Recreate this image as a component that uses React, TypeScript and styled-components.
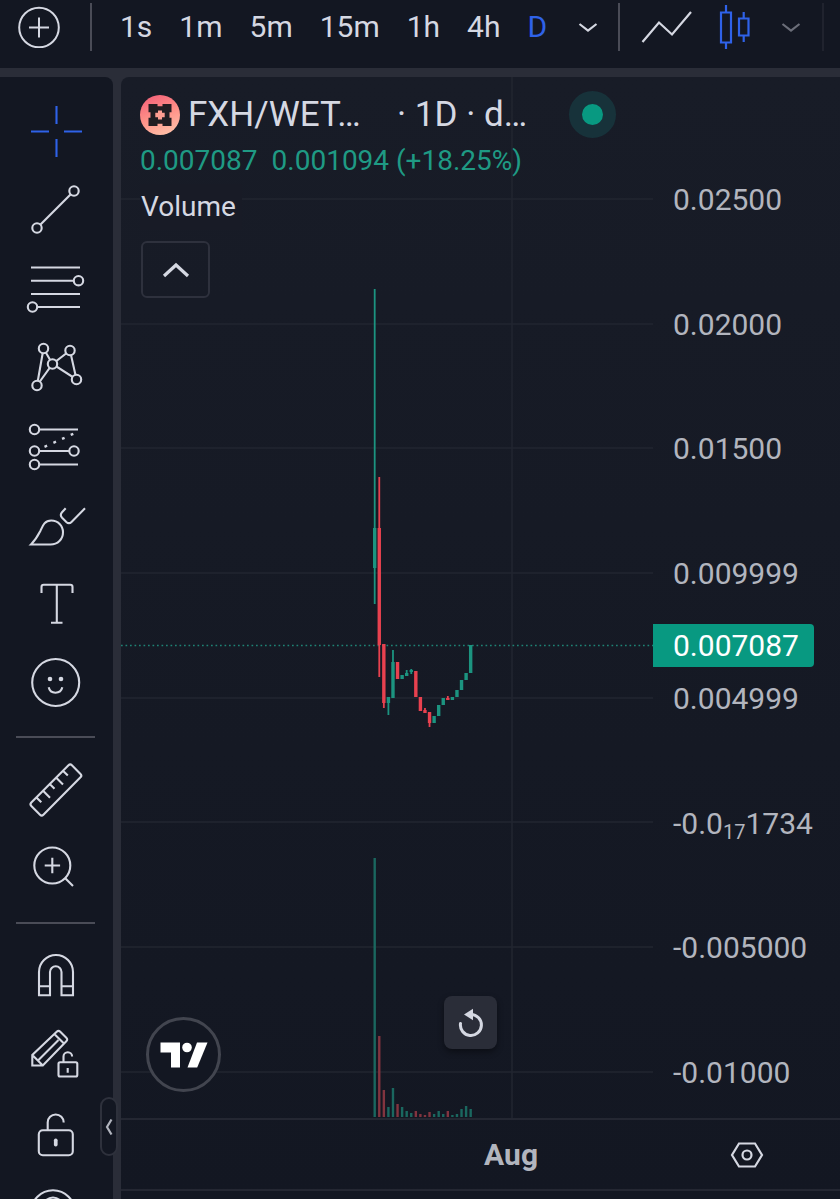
import React from "react";
import styled, { createGlobalStyle } from "styled-components";

const color = {
  frame: "#2a2d38",
  panel: "#131722",
  text: "#d5d8e2",
  axis: "#b2b5be",
  divider: "#4a4c57",
  accent: "#2f62e8",
  up: "#089981",
  down: "#e8414f",
};

const GlobalStyle = createGlobalStyle`
  * { box-sizing: border-box; }
  body {
    margin: 0;
    background: ${color.frame};
    color: ${color.text};
    font-family: Roboto, "Liberation Sans", sans-serif;
  }
`;

const Page = styled.div`
  display: flex;
  flex-direction: column;
  gap: 9px;
  height: 100vh;
  overflow: hidden;
`;

const PlainButton = styled.button`
  display: flex;
  flex: none;
  align-items: center;
  justify-content: center;
  margin: 0;
  padding: 0;
  border: 0;
  background: none;
  color: inherit;
  font: inherit;
`;

const Toolbar = styled.header`
  display: flex;
  flex: none;
  align-items: center;
  height: 68px;
  padding: 0 0 14px 18px;
  overflow: hidden;
  background: ${color.panel};
`;

const ToolbarDivider = styled.span<{ $faint?: boolean }>`
  flex: none;
  width: 2px;
  height: 48px;
  background: ${(p) => (p.$faint ? "#20232e" : color.divider)};
`;

const Intervals = styled.nav`
  display: flex;
  align-items: center;
  gap: 27px;
  margin: 0 16px 0 28px;
`;

const AddButton = styled(PlainButton)`
  margin-right: 30px;
`;

const IntervalButton = styled(PlainButton)<{ $active?: boolean }>`
  font-size: 30px;
  line-height: 36px;
  color: ${(p) => (p.$active ? color.accent : color.text)};
`;

const ChartTypes = styled.div`
  display: flex;
  align-items: center;
  gap: 26px;
  margin: 0 17px 0 21px;
`;

const Workspace = styled.div`
  display: flex;
  flex: 1;
  gap: 8px;
  min-height: 0;
`;

const Sidebar = styled.aside`
  position: relative;
  flex: none;
  width: 113px;
  padding-top: 14px;
  border-top-right-radius: 8px;
  background: ${color.panel};
`;

const ToolButton = styled(PlainButton)<{ $active?: boolean }>`
  width: 112px;
  height: 79px;
  color: ${(p) => (p.$active ? color.accent : color.text)};
`;

const ToolList = styled.div`
  display: flex;
  flex-direction: column;
  height: 100%;
  overflow: hidden;
`;

const ToolDivider = styled.hr`
  flex: none;
  width: 79px;
  height: 2px;
  margin: 13px 0 13px 16px;
  border: 0;
  background: ${color.divider};
`;

const CollapseTab = styled(PlainButton)`
  position: absolute;
  right: -5px;
  bottom: 43px;
  width: 18px;
  height: 59px;
  border: 2px solid #2e313c;
  border-radius: 9px;
  background: ${color.panel};
`;

const ChartPanel = styled.main`
  display: flex;
  flex: 1;
  flex-direction: column;
  min-width: 0;
  border-top-left-radius: 8px;
  background: linear-gradient(#181c27, #131722);
  overflow: hidden;
`;

const ChartRow = styled.div`
  position: relative;
  display: flex;
  flex: 1;
  min-height: 0;
`;

const Plot = styled.div`
  position: relative;
  flex: 1;
  min-width: 0;
`;

const PlotDrawing = styled.svg`
  display: block;
  width: 100%;
  height: 100%;
`;

const PriceAxis = styled.div`
  position: relative;
  display: flex;
  flex: none;
  flex-direction: column;
  justify-content: space-between;
  width: 187px;
  padding: 105px 0 27px 20px;
  color: ${color.axis};
  font-size: 30px;
  line-height: 36px;
  white-space: nowrap;
`;

const Subscript = styled.sub`
  font-size: 20px;
  line-height: 0;
  vertical-align: -5px;
`;

const LastPrice = styled.div`
  position: absolute;
  top: 52.5%;
  left: 0;
  width: 161px;
  padding: 4px 0 3px 20px;
  border-radius: 0 4px 4px 0;
  background: ${color.up};
  color: #fff;
`;

const Legend = styled.section`
  position: absolute;
  top: 14px;
  left: 19px;
`;

const SymbolRow = styled.div`
  display: grid;
  grid-template-columns: 40px 201px 164px 48px;
  gap: 8px;
  align-items: center;
  height: 47px;
  font-size: 35px;
  white-space: nowrap;
`;

const SymbolName = styled.h1`
  margin: 0;
  font-size: 35px;
  font-weight: 400;
  line-height: 40px;
`;

const StatusDot = styled.span`
  width: 47px;
  height: 47px;
  border: 13px solid #17323a;
  border-radius: 50%;
  background: ${color.up};
`;

const Values = styled.div`
  display: flex;
  gap: 14px;
  color: #1f9a84;
  font-size: 28px;
  line-height: 46px;
  white-space: nowrap;
`;

const StudyName = styled.div`
  width: fit-content;
  padding: 0 6px 0 1px;
  background: #181b26;
  font-size: 28px;
  line-height: 46px;
`;

const LegendToggle = styled(PlainButton)`
  width: 69px;
  height: 57px;
  margin: 11px 0 0 1px;
  border: 2px solid #2e313d;
  border-radius: 6px;
`;

const Watermark = styled.a`
  position: absolute;
  bottom: 26px;
  left: 25px;
  display: flex;
  align-items: center;
  justify-content: center;
  width: 75px;
  height: 75px;
  border: 3px solid #42454f;
  border-radius: 50%;
  background: ${color.panel};
`;

const ResetButton = styled(PlainButton)`
  position: absolute;
  right: 156px;
  bottom: 69px;
  width: 53px;
  height: 53px;
  border-radius: 8px;
  background: #2a2d38;
  box-shadow: 0 3px 6px rgba(0, 0, 0, 0.4);
`;

const TimeRow = styled.div`
  display: flex;
  flex: none;
  align-items: center;
  height: 71px;
  border-top: 2px solid #242732;
`;

const TimeAxis = styled.div`
  flex: 1;
  padding-left: 50.5%;
  color: ${color.axis};
  font-size: 30px;
  font-weight: 700;
  line-height: 36px;
`;

const AxisSettings = styled(PlainButton)`
  width: 187px;
`;

const Footer = styled.footer`
  flex: none;
  height: 10px;
  border-top: 2px solid #242732;
`;

const Chevron = ({ stroke = "currentColor" }: { stroke?: string }) => (
  <svg width="28" height="28" viewBox="0 0 28 28" fill="none" stroke={stroke} strokeWidth="2.2">
    <path d="M5.5 11 14 17.5 22.5 11" />
  </svg>
);

const ToolIcon = ({ children }: { children: React.ReactNode }) => (
  <svg width="112" height="79" viewBox="0 0 112 79" fill="none" stroke="currentColor" strokeWidth="2.1">
    {children}
  </svg>
);

const Nodes = ({ points }: { points: number[][] }) => (
  <>
    {points.map(([x, y]) => (
      <circle key={`${x}-${y}`} cx={x} cy={y} r="4.7" fill={color.panel} />
    ))}
  </>
);

const drawingTools = [
  {
    name: "Cross",
    icon: <path d="M56.5 15v18M56.5 48v18M31 40.5h18M64 40.5h18" />,
  },
  {
    name: "Trend line",
    icon: (
      <>
        <path d="M37 58 74 21" />
        <Nodes points={[[37, 58], [74, 21]]} />
      </>
    ),
  },
  {
    name: "Fib retracement",
    icon: (
      <>
        <path d="M31 18.5h49M31 31.7h47M31 45h49M32 58h48" />
        <Nodes points={[[78.5, 31.7], [32.5, 58]]} />
      </>
    ),
  },
  {
    name: "Pattern",
    icon: (
      <>
        <path d="M52.5 36 43.5 20.5 37 57.5 52.5 36 70 22.5 76.5 51.5Z" />
        <Nodes points={[[43.5, 20.5], [70, 22.5], [52.5, 36], [37, 57.5], [76.5, 51.5]]} />
      </>
    ),
  },
  {
    name: "Forecast",
    icon: (
      <>
        <path d="M35 22.5h43M35 44h39M35 57.5h43" />
        <path d="m44.5 39.8 2.6-1.1M53.4 35.8l2.6-1.1M62 31.9l2.6-1.1M70.7 27.9l2.6-1.1" strokeWidth="2.4" />
        <Nodes points={[[34.5, 22.5], [34.5, 44], [74, 44], [34.5, 57.5]]} />
      </>
    ),
  },
  {
    name: "Brush",
    icon: (
      <path d="M31 58.5c3-3 6.5-8 9.2-13.2 2.5-5.6 4.3-10.8 11-10.8 6.8 0 11.8 5.2 11.8 11.7 0 7-5.3 12.3-12.5 12.3ZM65.7 22.3l-3.7 4c-1.6 1.8-1.5 3.7.1 5.4l4.2 4.2c1.7 1.6 3.7 1.5 5.2 0L85 22.3" />
    ),
  },
  {
    name: "Text",
    icon: <path d="M41.5 28v-6q0-2.2 2.2-2.2h26.6q2.2 0 2.2 2.2v6M56.8 20v37.5M51 57.7h11.5" />,
  },
  {
    name: "Emoji",
    icon: (
      <>
        <circle cx="55.7" cy="38.5" r="23.5" />
        <circle cx="50" cy="35" r="2.3" fill="currentColor" stroke="none" />
        <circle cx="61" cy="35" r="2.3" fill="currentColor" stroke="none" />
        <path d="M48.7 43.3c1.5 7.2 12 7.2 13.6 0" />
      </>
    ),
  },
];

const measureTools = [
  {
    name: "Measure",
    icon: (
      <path d="M68.5 14.3q1.7-1.7 3.4 0l8.6 8.6q1.7 1.7 0 3.4L43.4 63.7q-1.7 1.7-3.4 0l-8.7-8.7q-1.7-1.7 0-3.4ZM36.7 46.7l4.6 4.6M43.3 40l6.7 6.7M50 33.3l4.5 4.5M56.5 27l6.5 6.5M63.2 20l4.6 4.6" />
    ),
  },
  {
    name: "Zoom in",
    icon: (
      <>
        <circle cx="52.3" cy="35.5" r="18" />
        <path d="M44.7 35.5h15.4M52.3 27.8v15.4M65 48l8 8" />
      </>
    ),
  },
];

const stateTools = [
  {
    name: "Magnet",
    icon: <path d="M39 58.2V35a17 17 0 0 1 34 0v23.2H61.5V35a5.7 5.7 0 0 0-11.5 0v23.2ZM39 49.2h11M61.5 49.2H73" />,
  },
  {
    name: "Stay in drawing mode",
    icon: (
      <>
        <path d="M32.3 49.5V39l24.4-23.3q1.8-1.7 3.6 0l6 6q1.8 1.8 0 3.6L42.8 49.5ZM32.3 39l10.5 10.5M54.3 18l9.7 9.5M38 44.5 58.5 24" />
        <rect x="58.5" y="46.2" width="18.8" height="14.3" rx="1.5" />
        <path d="M63.5 46v-5.5a4.3 4.3 0 0 1 8.6 0M67.7 52v4.7" />
      </>
    ),
  },
  {
    name: "Lock drawings",
    icon: (
      <>
        <rect x="38.8" y="35.2" width="34" height="25" rx="4" />
        <path d="M47.7 35v-7.5a8 8 0 0 1 16 0" />
        <rect x="53.9" y="43.5" width="3.7" height="8" rx="1.8" fill="currentColor" stroke="none" />
      </>
    ),
  },
  {
    name: "Hide drawings",
    icon: (
      <>
        <circle cx="53" cy="38.3" r="22" />
        <circle cx="53" cy="33.5" r="10" />
      </>
    ),
  },
];

const intervals = ["1s", "1m", "5m", "15m", "1h", "4h", "D"];

const gridLines = [122, 247, 371, 496, 621, 745, 870, 995];

/* direction, body top, body bottom, wick top, wick bottom, volume top */
const candles: [string, number, number, number, number, number][] = [
  ["up", 451, 491, 212, 527, 781],
  ["down", 451, 568, 400, 600, 959],
  ["down", 567, 626, 567, 631, 1013],
  ["up", 620, 626, 620, 638, 1030],
  ["up", 585, 621, 573, 621, 1011],
  ["down", 585, 602, 585, 602, 1027],
  ["up", 598, 602, 598, 602, 1030],
  ["up", 596, 599, 593, 599, 1034],
  ["up", 593, 595, 592, 597, 1036],
  ["down", 594, 620, 594, 620, 1034],
  ["down", 620, 634, 620, 634, 1037],
  ["down", 633, 636, 631, 636, 1038],
  ["down", 635, 646, 635, 650, 1035],
  ["up", 639, 646, 639, 646, 1037],
  ["up", 628, 639, 628, 639, 1034],
  ["up", 621, 628, 621, 628, 1037],
  ["down", 621, 623, 619, 623, 1034],
  ["up", 620, 623, 620, 623, 1038],
  ["up", 613, 620, 613, 620, 1037],
  ["up", 603, 613, 603, 613, 1032],
  ["up", 596, 603, 596, 603, 1029],
  ["up", 568, 596, 568, 596, 1032],
];

const Chart = () => (
  <PlotDrawing viewBox="0 0 532 1041" preserveAspectRatio="none" role="img" aria-label="FXH/WETH daily candles">
    <g stroke="#222631" strokeWidth="1.5">
      {gridLines.map((y) => (
        <line key={y} x1="0" x2="532" y1={y} y2={y} />
      ))}
      <line x1="391" x2="391" y1="0" y2="1041" />
    </g>
    <line x1="0" x2="532" y1="568.5" y2="568.5" stroke="#1f8274" strokeWidth="1.5" strokeDasharray="1.7 2.8" />
    {candles.map(([direction, top, bottom, high, low, volume], i) => {
      const x = 253.7 + i * 4.57;
      const up = direction === "up";
      return (
        <g key={i} fill={up ? "#1c9480" : color.down}>
          <rect x={x - 1.2} y={volume} width="2.4" height={1040 - volume} fill={up ? "#1a675f" : "#82343f"} />
          <rect x={x - 0.9} y={high} width="1.8" height={low - high} />
          <rect x={x - 1.7} y={top} width="3.4" height={bottom - top} />
        </g>
      );
    })}
  </PlotDrawing>
);

const TokenLogo = () => (
  <svg width="40" height="40" viewBox="0 0 40 40">
    <defs>
      <linearGradient id="token" x1="0.3" y1="0" x2="0.7" y2="1">
        <stop offset="0" stopColor="#f4647a" />
        <stop offset="0.5" stopColor="#ff9188" />
        <stop offset="1" stopColor="#ffc0a8" />
      </linearGradient>
    </defs>
    <circle cx="20" cy="20" r="20" fill="url(#token)" />
    <path
      fill="#211d22"
      d="M8.500 9h9v2.200h5V9h9v8.200h-2v5.600h2V31h-9v-2.200h-5V31h-9v-8.200h2v-5.600h-2Z"
    />
    <path fill="#ff9d91" d="M18 15.500h4v2.300h2.700v4.400H22v2.300h-4v-2.300h-2.700v-4.400H18Z" />
  </svg>
);

export default function App() {
  return (
    <>
      <GlobalStyle />
      <Page>
        <Toolbar>
          <AddButton aria-label="Add symbol">
            <svg width="42" height="42" viewBox="0 0 42 42" fill="none" stroke="currentColor" strokeWidth="2">
              <circle cx="21" cy="21.5" r="19.8" />
              <path d="M11 21.5h20M21 11.5v20" />
            </svg>
          </AddButton>
          <ToolbarDivider />
          <Intervals>
            {intervals.map((name) => (
              <IntervalButton key={name} $active={name === "D"}>
                {name}
              </IntervalButton>
            ))}
            <PlainButton aria-label="More intervals">
              <Chevron />
            </PlainButton>
          </Intervals>
          <ToolbarDivider />
          <ChartTypes>
            <PlainButton aria-label="Line">
              <svg width="52" height="36" viewBox="0 0 52 36" fill="none" stroke="currentColor" strokeWidth="2.2">
                <path d="M1.5 33 18 13.5 31 25.5 50 3" />
              </svg>
            </PlainButton>
            <PlainButton aria-label="Candles">
              <svg width="32" height="46" viewBox="0 0 32 46" fill="none" stroke={color.accent} strokeWidth="2.2">
                <path d="M2 8.5h10v30H2ZM7 1v7.5M7 38.5V45M20 14.5h9.5v17H20ZM24.7 8v6.5M24.7 31.5V38" />
              </svg>
            </PlainButton>
            <PlainButton aria-label="More chart types">
              <Chevron stroke="#6b6e79" />
            </PlainButton>
          </ChartTypes>
          <ToolbarDivider $faint />
        </Toolbar>

        <Workspace>
          <Sidebar>
            <ToolList>
              {drawingTools.map((tool, i) => (
                <ToolButton key={tool.name} aria-label={tool.name} $active={i === 0}>
                  <ToolIcon>{tool.icon}</ToolIcon>
                </ToolButton>
              ))}
              <ToolDivider />
              {measureTools.map((tool) => (
                <ToolButton key={tool.name} aria-label={tool.name}>
                  <ToolIcon>{tool.icon}</ToolIcon>
                </ToolButton>
              ))}
              <ToolDivider />
              {stateTools.map((tool) => (
                <ToolButton key={tool.name} aria-label={tool.name}>
                  <ToolIcon>{tool.icon}</ToolIcon>
                </ToolButton>
              ))}
            </ToolList>
            <CollapseTab aria-label="Collapse toolbar">
              <svg width="10" height="18" viewBox="0 0 10 18" fill="none" stroke={color.axis} strokeWidth="2.2">
                <path d="M7.5 1.5 3 9l4.5 7.5" />
              </svg>
            </CollapseTab>
          </Sidebar>

          <ChartPanel>
            <ChartRow>
              <Plot>
                <Chart />
                <Legend>
                  <SymbolRow>
                    <TokenLogo />
                    <SymbolName>FXH/WET…</SymbolName>
                    <span>· 1D · d…</span>
                    <StatusDot />
                  </SymbolRow>
                  <Values>
                    <span>0.007087</span>
                    <span>0.001094 (+18.25%)</span>
                  </Values>
                  <StudyName>Volume</StudyName>
                  <LegendToggle aria-label="Hide indicators">
                    <svg width="28" height="18" viewBox="0 0 28 18" fill="none" stroke="currentColor" strokeWidth="3.2">
                      <path d="M2 15 14 4l12 11" />
                    </svg>
                  </LegendToggle>
                </Legend>
                <Watermark href="#" aria-label="TradingView">
                  <svg width="48" height="26" viewBox="0 0 48 26" fill="#fff">
                    <path d="M.5.5H20v25h-9v-15H.5Z" />
                    <circle cx="27" cy="5.5" r="4.8" />
                    <path d="M37 .5h10.500l-10.300 25H27.500Z" />
                  </svg>
                </Watermark>
                <ResetButton aria-label="Reset chart">
                  <svg width="28" height="30" viewBox="0 0 28 30" fill="none" stroke="currentColor" strokeWidth="3">
                    <path d="M3.500 15.500A10.500 10.500 0 1 0 14 6.500" strokeLinecap="round" />
                    <path d="m7 6.500 9-5.700v11.400Z" fill="currentColor" stroke="none" />
                  </svg>
                </ResetButton>
              </Plot>
              <PriceAxis>
                <span>0.02500</span>
                <span>0.02000</span>
                <span>0.01500</span>
                <span>0.009999</span>
                <span>0.004999</span>
                <span>
                  -0.0<Subscript>17</Subscript>1734
                </span>
                <span>-0.005000</span>
                <span>-0.01000</span>
                <LastPrice>0.007087</LastPrice>
              </PriceAxis>
            </ChartRow>
            <TimeRow>
              <TimeAxis>Aug</TimeAxis>
              <AxisSettings aria-label="Axis settings">
                <svg width="34" height="28" viewBox="0 0 34 28" fill="none" stroke="currentColor" strokeWidth="2.2">
                  <path d="M9 2.5h16L32 14l-7 11.5H9L2 14Z" />
                  <circle cx="17" cy="14" r="4.5" />
                </svg>
              </AxisSettings>
            </TimeRow>
            <Footer />
          </ChartPanel>
        </Workspace>
      </Page>
    </>
  );
}
